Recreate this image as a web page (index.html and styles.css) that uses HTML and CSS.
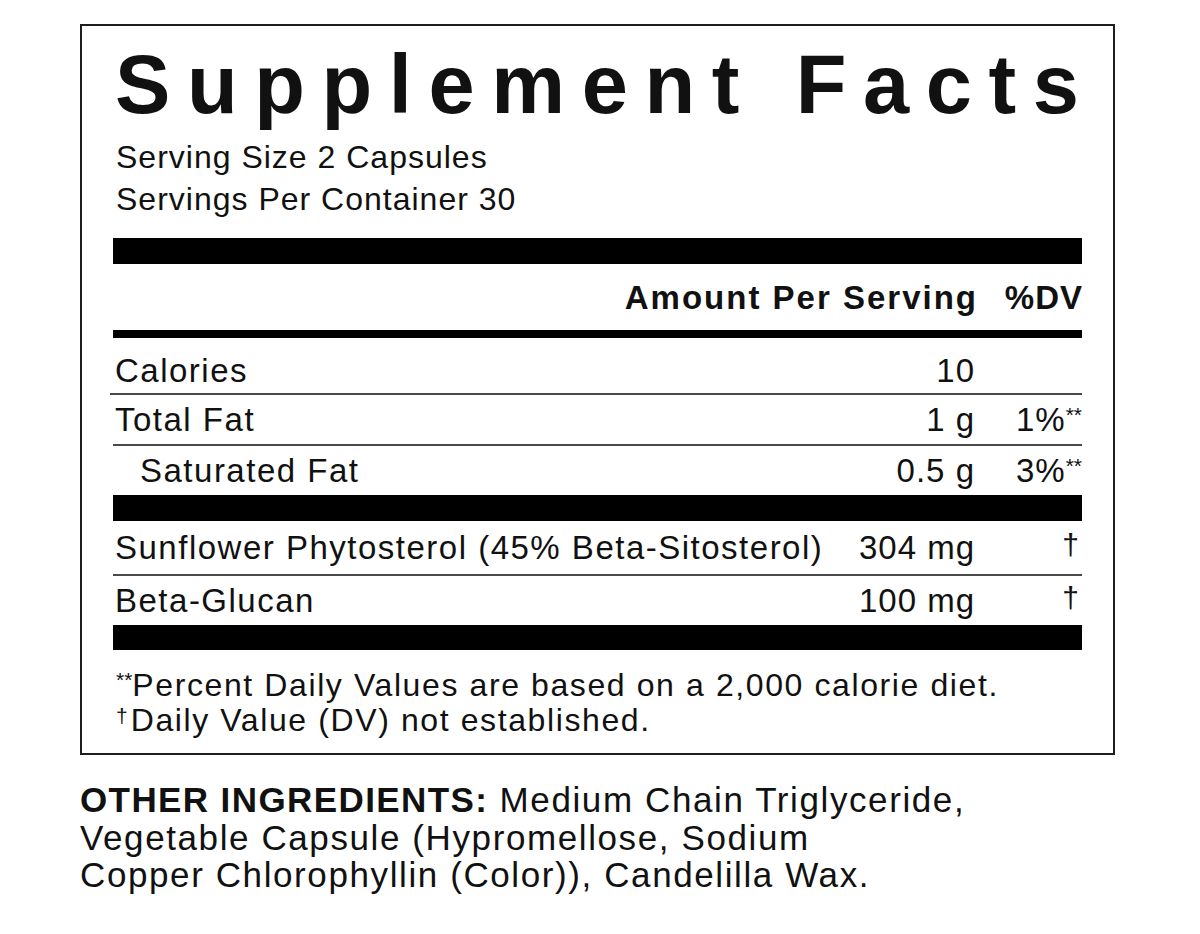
FILE: index.html
```html
<!DOCTYPE html>
<html lang="en">
<head>
<meta charset="utf-8">
<title>Supplement Facts</title>
<link rel="stylesheet" href="styles.css">
</head>
<body>
<main class="page">
  <section class="label">
    <h1 class="title">Supplement Facts</h1>
    <div class="serving">
      <p>Serving Size 2 Capsules</p>
      <p>Servings Per Container 30</p>
    </div>
    <div class="bar bar--thick bar--top"></div>
    <div class="row row--head">
      <span class="name"></span>
      <span class="amt">Amount Per Serving</span>
      <span class="dv">%DV</span>
    </div>
    <div class="bar bar--medium"></div>
    <div class="row row--first row--line">
      <span class="name">Calories</span>
      <span class="amt">10</span>
      <span class="dv"></span>
    </div>
    <div class="row row--line">
      <span class="name">Total Fat</span>
      <span class="amt">1 g</span>
      <span class="dv">1%<span class="ast">**</span></span>
    </div>
    <div class="row row--sat">
      <span class="name name--indent">Saturated Fat</span>
      <span class="amt">0.5 g</span>
      <span class="dv">3%<span class="ast">**</span></span>
    </div>
    <div class="bar bar--thick"></div>
    <div class="row row--sun row--line">
      <span class="name">Sunflower Phytosterol (45% Beta-Sitosterol)</span>
      <span class="amt">304 mg</span>
      <span class="dv"><span class="dagger">†</span></span>
    </div>
    <div class="row row--beta">
      <span class="name">Beta-Glucan</span>
      <span class="amt">100 mg</span>
      <span class="dv"><span class="dagger">†</span></span>
    </div>
    <div class="bar bar--thick bar--last"></div>
    <div class="notes">
      <p><span class="note-ast">**</span>Percent Daily Values are based on a 2,000 calorie diet.</p>
      <p><span class="note-dag">†</span>Daily Value (DV) not established.</p>
    </div>
  </section>
  <p class="other"><strong>OTHER INGREDIENTS:</strong> Medium Chain Triglyceride,<br>Vegetable Capsule (Hypromellose, Sodium<br>Copper Chlorophyllin (Color)), Candelilla Wax.</p>
</main>
</body>
</html>
```

FILE: styles.css
```css
* { box-sizing: border-box; }
html, body { margin: 0; padding: 0; background: #fff; }
body {
  font-family: "Liberation Sans", Arial, sans-serif;
  color: #111;
}
.page {
  padding: 24px 0 0 80px;
}
.label {
  width: 1035px;
  border: 2px solid #1e1e1e;
  padding: 18px 31px 0 31px;
  height: 731px;
}
.title {
  margin: 0;
  font-size: 83px;
  line-height: 82px;
  font-weight: 700;
  letter-spacing: 16.6px;
  white-space: nowrap;
  padding-left: 2px;
}
.serving {
  margin-top: 10px;
  font-size: 32px;
  line-height: 42px;
  letter-spacing: 1px;
  padding-left: 3px;
}
.serving p { margin: 0; }
.bar { background: #000; }
.bar--thick { height: 26px; }
.bar--top { margin-top: 18px; }
.bar--medium { height: 8px; }
.bar--last { height: 25px; }
.row {
  display: flex;
  align-items: center;
  font-size: 33px;
  letter-spacing: 1.5px;
  height: 51px;
  line-height: 33px;
}
.row--line { border-bottom: 2px solid #4a4a4a; }
.row--head {
  height: 66px;
  font-weight: 700;
  letter-spacing: 2px;
}
.row--first { height: 57px; padding-top: 9px; }
.row--line.row--first { margin-left: -3px; padding-left: 3px; }
.row--sat { height: 49px; }
.row--sun { height: 55px; }
.row--beta { height: 49px; }
.name { flex: 1; padding-left: 2px; white-space: nowrap; }
.name--indent { padding-left: 27px; }
.amt { text-align: right; white-space: nowrap; letter-spacing: 1px; }
.row--head .amt { letter-spacing: 2px; margin-right: -2px; }
.dv {
  width: 107px;
  text-align: right;
  white-space: nowrap;
  letter-spacing: 1px;
}
.row--head .dv { letter-spacing: 1px; margin-right: -1px; }
.ast {
  font-size: 21px;
  vertical-align: 9px;
  letter-spacing: 0;
  line-height: 0;
}
.dagger {
  display: inline-block;
  font-size: 30px;
  vertical-align: 6px;
  padding-right: 2px;
  line-height: 1;
}
.notes {
  padding-top: 18px;
  font-size: 32px;
  line-height: 35px;
  letter-spacing: 1.6px;
  padding-left: 3px;
}
.notes p { margin: 0; }
.note-ast {
  font-size: 21px;
  vertical-align: 9px;
  letter-spacing: 0;
  line-height: 0;
}
.note-dag {
  font-size: 21px;
  vertical-align: 8px;
  letter-spacing: 0;
  padding-right: 3px;
  line-height: 0;
}
.other {
  margin: 26px 0 0 0;
  font-size: 35px;
  line-height: 37.5px;
  letter-spacing: 1.6px;
}
.other strong {
  font-weight: 700;
  letter-spacing: 1.4px;
}
```
